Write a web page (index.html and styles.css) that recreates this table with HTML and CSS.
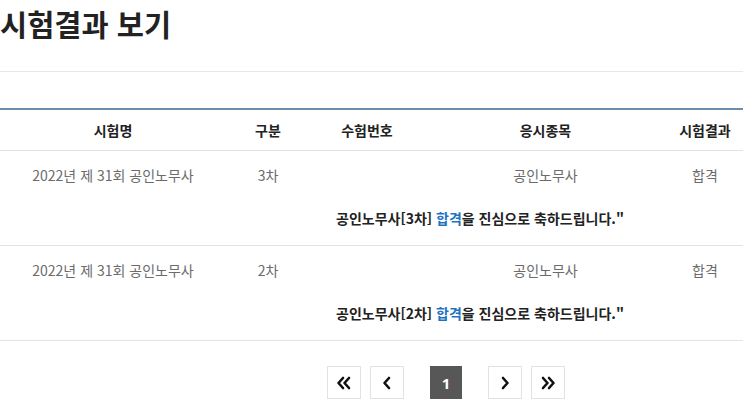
FILE: index.html
```html
<!DOCTYPE html>
<html lang="ko">
<head>
<meta charset="utf-8">
<title>시험결과 보기</title>
<link rel="stylesheet" href="styles.css">
</head>
<body>
<h1 class="title">시험결과 보기</h1>
<div class="divider"></div>
<div class="table">
  <div class="row head">
    <div class="cell">시험명</div>
    <div class="cell">구분</div>
    <div class="cell">수험번호</div>
    <div class="cell">응시종목</div>
    <div class="cell">시험결과</div>
  </div>
  <div class="group">
    <div class="row data">
      <div class="cell">2022년 제 31회 공인노무사</div>
      <div class="cell">3차</div>
      <div class="cell"></div>
      <div class="cell">공인노무사</div>
      <div class="cell">합격</div>
    </div>
    <p class="msg">공인노무사[3차] <span class="pass">합격</span>을 진심으로 축하드립니다."</p>
  </div>
  <div class="group">
    <div class="row data">
      <div class="cell">2022년 제 31회 공인노무사</div>
      <div class="cell">2차</div>
      <div class="cell"></div>
      <div class="cell">공인노무사</div>
      <div class="cell">합격</div>
    </div>
    <p class="msg">공인노무사[2차] <span class="pass">합격</span>을 진심으로 축하드립니다."</p>
  </div>
</div>
<nav class="pager">
  <a class="pg" href="#" aria-label="처음">
    <svg width="16" height="14" viewBox="0 0 16 14"><path d="M7 2 L2.5 7 L7 12 M13 2 L8.5 7 L13 12" fill="none" stroke="#111" stroke-width="2.6" stroke-linecap="round" stroke-linejoin="round"/></svg>
  </a>
  <a class="pg" href="#" aria-label="이전">
    <svg width="10" height="14" viewBox="0 0 10 14"><path d="M7 2 L2.5 7 L7 12" fill="none" stroke="#111" stroke-width="2.6" stroke-linecap="round" stroke-linejoin="round"/></svg>
  </a>
  <span class="pg active">1</span>
  <a class="pg" href="#" aria-label="다음">
    <svg width="10" height="14" viewBox="0 0 10 14"><path d="M3 2 L7.5 7 L3 12" fill="none" stroke="#111" stroke-width="2.6" stroke-linecap="round" stroke-linejoin="round"/></svg>
  </a>
  <a class="pg" href="#" aria-label="마지막">
    <svg width="16" height="14" viewBox="0 0 16 14"><path d="M3 2 L7.5 7 L3 12 M9 2 L13.5 7 L9 12" fill="none" stroke="#111" stroke-width="2.6" stroke-linecap="round" stroke-linejoin="round"/></svg>
  </a>
</nav>
</body>
</html>
```

FILE: styles.css
```css
html, body {
  margin: 0;
  padding: 0;
  background: #fff;
}
body {
  width: 743px;
  font-family: "Noto Sans CJK KR", "Noto Sans", sans-serif;
  color: #222;
}
.title {
  margin: 0;
  padding: 4px 0 0 0;
  font-size: 29.5px;
  line-height: 38px;
  font-weight: 700;
  color: #222;
}
.divider {
  margin-top: 29px;
  height: 1px;
  background: #e8e8e8;
}
.table {
  margin-top: 36px;
  border-top: 2px solid #6b8dac;
}
.row {
  display: grid;
  grid-template-columns: 226px 84px 114px 243px 76px;
}
.cell {
  text-align: center;
  white-space: nowrap;
}
.head {
  height: 40px;
  align-items: center;
  font-size: 14px;
  font-weight: 700;
  color: #222;
  border-bottom: 1px solid #e3e3e3;
}
.group {
  border-bottom: 1px solid #e3e3e3;
  padding: 14px 0 17px;
}
.data {
  font-size: 14px;
  line-height: 20px;
  color: #6b6b6b;
}
.msg {
  margin: 23px 0 0;
  padding-left: 336px;
  font-size: 14px;
  line-height: 20px;
  font-weight: 700;
  color: #222;
  white-space: nowrap;
}
.pass {
  color: #1f73c4;
}
.pager {
  display: flex;
  padding-left: 327px;
  margin-top: 25px;
  align-items: center;
}
.pg {
  box-sizing: border-box;
  width: 34px;
  height: 33px;
  border: 1px solid #e2e2e2;
  display: flex;
  align-items: center;
  justify-content: center;
  text-decoration: none;
  background: #fff;
}
.pg + .pg {
  margin-left: 9px;
}
.pg.active {
  width: 32px;
  margin-left: 26px;
  margin-right: 17px;
  background: #575757;
  border-color: #575757;
  color: #fff;
  font-size: 15px;
  font-weight: 700;
  font-family: "Noto Sans", sans-serif;
}
```
